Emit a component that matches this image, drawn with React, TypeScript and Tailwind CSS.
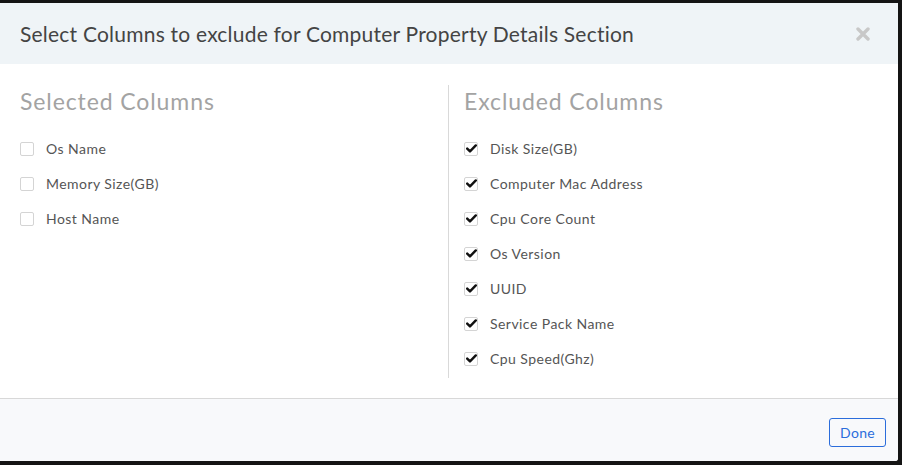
import React from 'react';

const selected = ['Os Name', 'Memory Size(GB)', 'Host Name'];
const excluded = [
  'Disk Size(GB)',
  'Computer Mac Address',
  'Cpu Core Count',
  'Os Version',
  'UUID',
  'Service Pack Name',
  'Cpu Speed(Ghz)',
];

function Box({ checked }: { checked: boolean }) {
  return (
    <span className="w-[14px] h-[14px] shrink-0 rounded-[2px] border border-[#d4d4d4] bg-white flex items-center justify-center">
      {checked && (
        <svg width="11" height="9" viewBox="0 0 11 9">
          <path d="M1.2 4.6 L4 7.4 L9.8 1.4" fill="none" stroke="#111" strokeWidth="2.4" strokeLinecap="round" strokeLinejoin="round" />
        </svg>
      )}
    </span>
  );
}

function Row({ label, checked }: { label: string; checked: boolean }) {
  return (
    <label className="flex items-center gap-[12px] h-[35px] text-[14px] tracking-[0.45px] text-[#555]">
      <Box checked={checked} />
      <span>{label}</span>
    </label>
  );
}

export default function App() {
  return (
    <div className="w-[902px] h-[465px] bg-[#141414] pt-[3px] pr-[4px] pb-[4px]" style={{ fontFamily: 'Lato, "Open Sans", sans-serif' }}>
      <div className="h-full bg-white rounded-br-[3px] flex flex-col overflow-hidden">
        <div className="h-[61px] shrink-0 bg-[#eff4f7] flex items-center justify-between pl-[20px] pr-[28px]">
          <h2 className="text-[21px] text-[#444] tracking-[0.22px]">Select Columns to exclude for Computer Property Details Section</h2>
          <svg width="14" height="14" viewBox="0 0 14 14">
            <path d="M2 2 L12 12 M12 2 L2 12" stroke="#c8c8c8" strokeWidth="3.4" strokeLinecap="round" />
          </svg>
        </div>
        <div className="flex-1 flex pt-[21px] pb-[20px]">
          <div className="w-[448px] pl-[20px]">
            <h3 className="text-[23px] text-[#a3a3a3] leading-[32px] mb-[14px] tracking-[0.9px]">Selected Columns</h3>
            {selected.map((s) => (
              <Row key={s} label={s} checked={false} />
            ))}
          </div>
          <div className="w-px bg-[#d9d9d9]" />
          <div className="flex-1 pl-[15px]">
            <h3 className="text-[23px] text-[#a3a3a3] leading-[32px] mb-[14px] tracking-[0.9px]">Excluded Columns</h3>
            {excluded.map((s) => (
              <Row key={s} label={s} checked={true} />
            ))}
          </div>
        </div>
        <div className="h-[63px] shrink-0 border-t border-[#d8d8d8] bg-[#f8f9fb] flex items-center justify-end pr-[12px]">
          <button className="h-[29px] w-[57px] rounded-[3px] border border-[#2b6ddb] text-[#2b6ddb] text-[14px] tracking-[0.3px] mt-[4px]">
            Done
          </button>
        </div>
      </div>
    </div>
  );
}
